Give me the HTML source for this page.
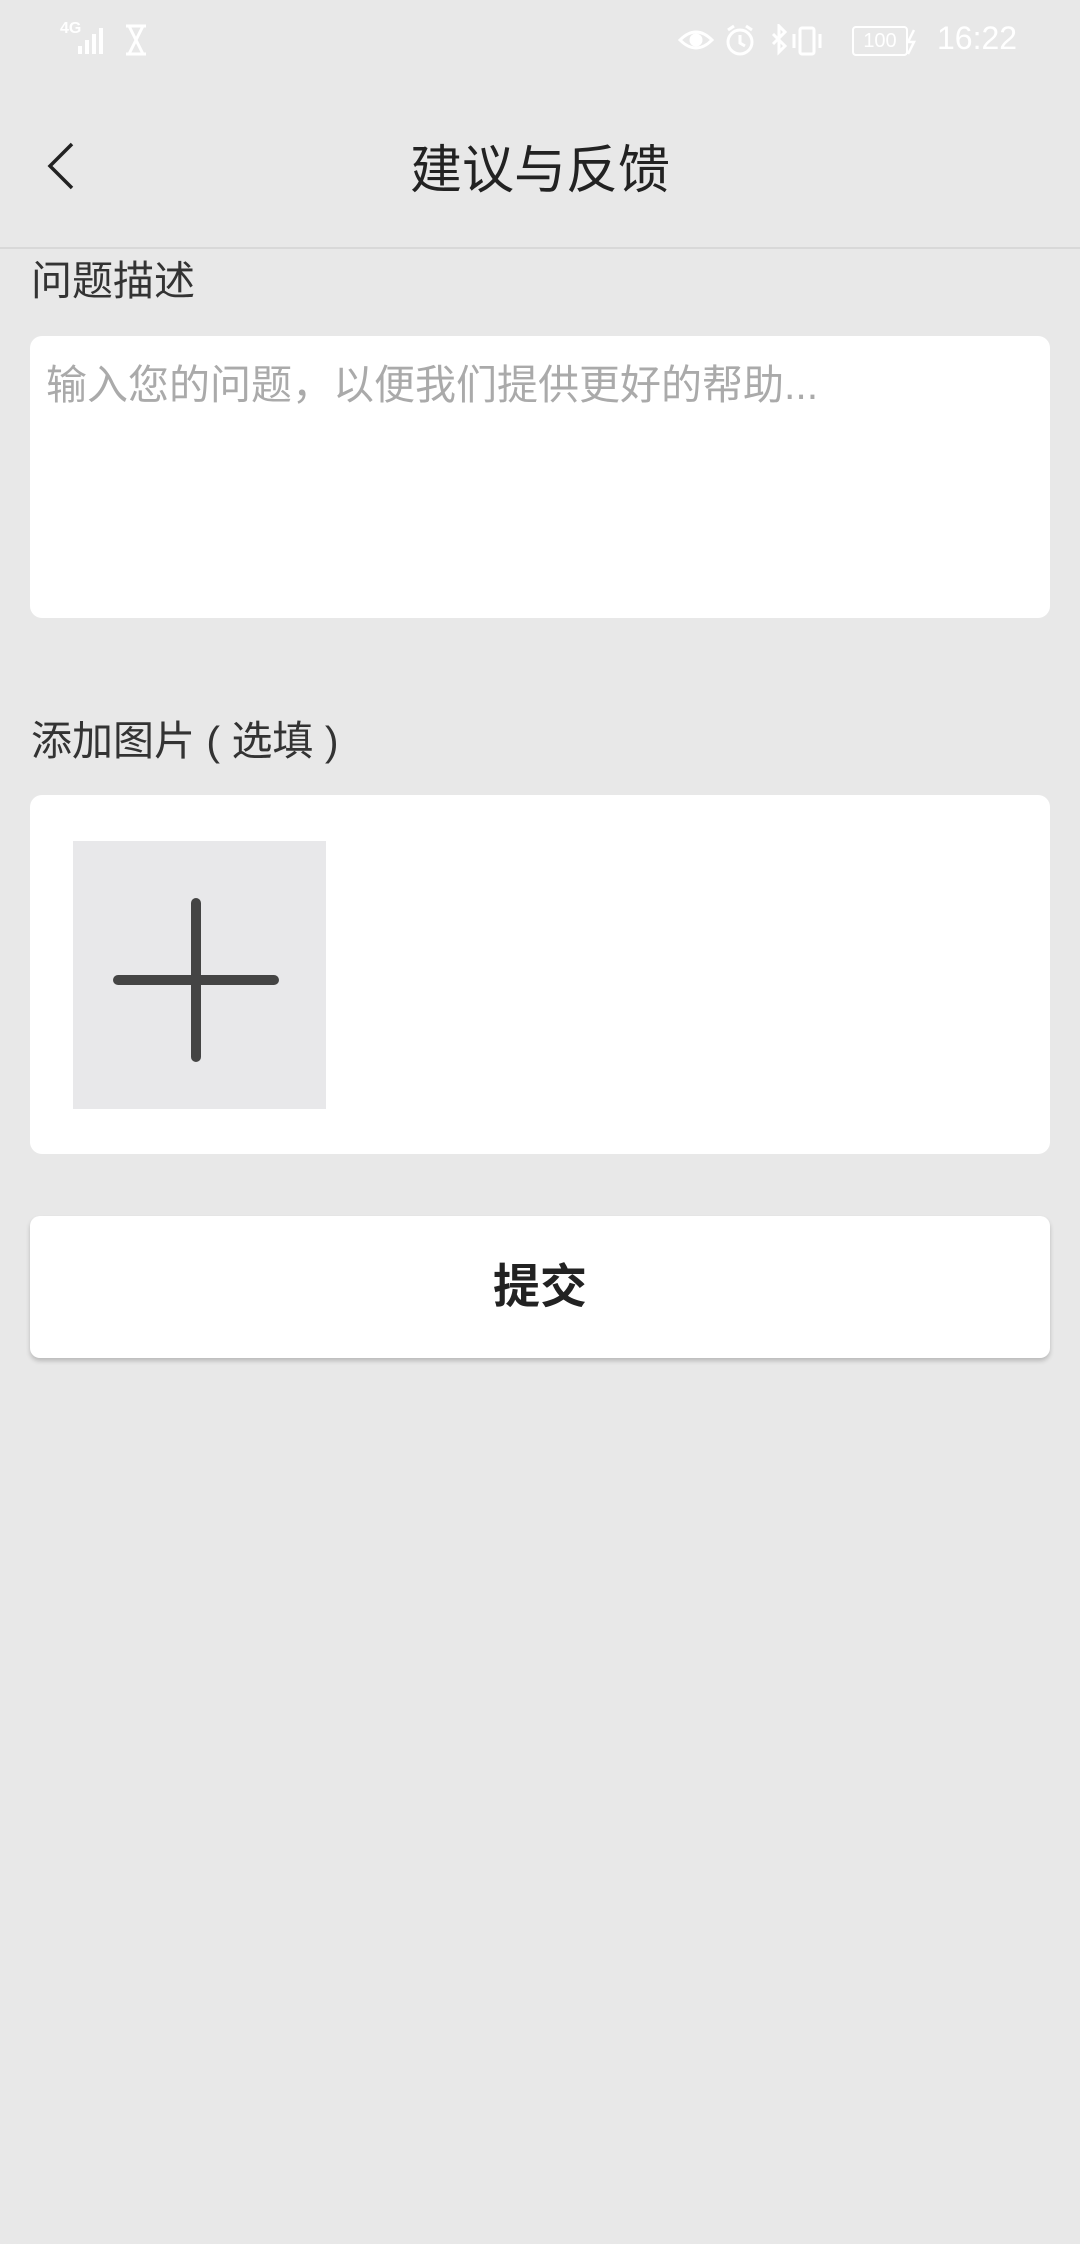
<!DOCTYPE html>
<html><head><meta charset="utf-8"><style>
body{margin:0;width:1080px;height:2244px;background:#e8e8e8;font-family:"Liberation Sans","Noto Sans CJK SC",sans-serif;position:relative;overflow:hidden;color:#333}
.a{position:absolute}
</style></head><body>
<div class="a" style="left:60px;top:20px;font-size:16px;color:#fff;font-weight:bold">4G</div>
<svg class="a" style="left:78px;top:24px" width="34" height="32"><g fill="#fff"><rect x="0" y="22" width="4" height="8"/><rect x="7" y="16" width="4" height="14"/><rect x="14" y="10" width="4" height="20"/><rect x="21" y="4" width="4" height="26"/></g></svg>
<svg class="a" style="left:124px;top:24px" width="24" height="32"><path d="M2 2h20M2 30h20M5 2l14 28M19 2L5 30" stroke="#fff" stroke-width="3" fill="none"/></svg>
<svg class="a" style="left:678px;top:24px" width="360" height="36" fill="none" stroke="#fff" stroke-width="3">
<path d="M2 16q16-16 32 0q-16 16-32 0z"/><circle cx="18" cy="16" r="5" fill="#fff"/>
<circle cx="62" cy="18" r="12"/><path d="M62 11v8l5 3M50 6l6-4M74 6l-6-4"/>
<path d="M95 10l12 12-6 6V2l6 6-12 12"/>
<rect x="122" y="4" width="14" height="26" rx="2"/><path d="M116 10v14M142 10v14"/>
<path d="M236 6l-6 12h6l-6 12" stroke-width="2.5"/>
</svg>
<div class="a" style="left:852px;top:26px;width:52px;height:26px;border:2px solid #fff;border-radius:4px;font-size:20px;color:#fff;text-align:center;line-height:26px">100</div>
<div class="a" style="left:937px;top:20px;font-size:32px;color:#fff">16:22</div>
<svg class="a" style="left:44px;top:140px" width="32" height="52"><path d="M28 4L6 26l22 22" stroke="#222" stroke-width="3.5" fill="none"/></svg>
<div class="a" style="left:0;width:1080px;top:128px;text-align:center;font-size:52px;color:#222">建议与反馈</div>
<div class="a" style="left:0;top:247px;width:1080px;height:2px;background:#d8d8d8"></div>
<div class="a" style="left:31px;top:247px;font-size:41px">问题描述</div>
<div class="a" style="left:30px;top:336px;width:1020px;height:282px;background:#fff;border-radius:12px"></div>
<div class="a" style="left:46px;top:351px;font-size:41px;color:#aaa">输入您的问题，以便我们提供更好的帮助...</div>
<div class="a" style="left:31px;top:707px;font-size:41px">添加图片<span style="font-family:'Liberation Sans',sans-serif;font-weight:300"> ( </span>选填<span style="font-family:'Liberation Sans',sans-serif"> )</span></div>
<div class="a" style="left:30px;top:795px;width:1020px;height:359px;background:#fff;border-radius:12px"></div>
<div class="a" style="left:73px;top:841px;width:253px;height:268px;background:#e8e8ea"></div>
<svg class="a" style="left:73px;top:841px" width="253" height="268"><path d="M45 139h156M123 62v154" stroke="#444" stroke-width="10" stroke-linecap="round"/></svg>
<div class="a" style="left:30px;top:1216px;width:1020px;height:142px;background:#fff;border-radius:10px;box-shadow:0 3px 5px rgba(0,0,0,.2);text-align:center;line-height:142px;font-size:47px;font-weight:bold;color:#222">提交</div>
</body></html>
